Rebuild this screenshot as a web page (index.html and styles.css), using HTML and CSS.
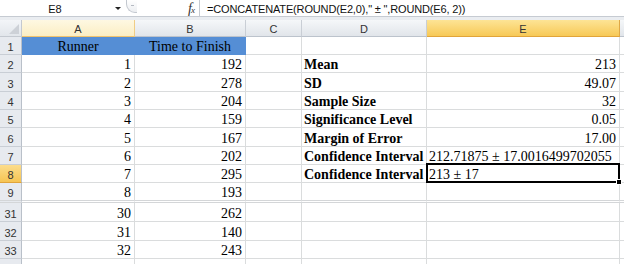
FILE: index.html
```html
<!DOCTYPE html>
<html>
<head>
<title>Confidence Interval</title>
<meta charset="utf-8">
<link rel="stylesheet" href="styles.css">
</head>
<body>

<!-- barra de fórmulas -->
<div class="formula-bar">
	<div class="name-box">E8</div>
	<div class="name-drop"><span class="arrow"></span></div>
	<div class="fx-area">
		<span class="grip"><span class="dash"></span></span>
		<span class="fx"><i>f</i><i class="x">x</i></span>
	</div>
	<div class="formula">=CONCATENATE(ROUND(E2,0)," ± ",ROUND(E6, 2))</div>
</div>
<div class="band"></div>

<!-- hoja -->
<div class="sheet">
	<div class="corner"><span class="tri"></span></div>
	<div class="hd hot">A</div>
	<div class="hd">B</div>
	<div class="hd">C</div>
	<div class="hd">D</div>
	<div class="hd sel">E</div>
	<div class="hd"></div>

	<div class="rh">1</div>
	<div class="c blue mid">Runner</div>
	<div class="c blue mid">Time to Finish</div>
	<div class="c"></div><div class="c"></div><div class="c"></div><div class="c"></div>

	<div class="rh">2</div>
	<div class="c num">1</div><div class="c num">192</div><div class="c"></div>
	<div class="c lbl">Mean</div><div class="c num">213</div><div class="c"></div>

	<div class="rh">3</div>
	<div class="c num">2</div><div class="c num">278</div><div class="c"></div>
	<div class="c lbl">SD</div><div class="c num">49.07</div><div class="c"></div>

	<div class="rh">4</div>
	<div class="c num">3</div><div class="c num">204</div><div class="c"></div>
	<div class="c lbl">Sample Size</div><div class="c num">32</div><div class="c"></div>

	<div class="rh">5</div>
	<div class="c num">4</div><div class="c num">159</div><div class="c"></div>
	<div class="c lbl">Significance Level</div><div class="c num">0.05</div><div class="c"></div>

	<div class="rh">6</div>
	<div class="c num">5</div><div class="c num">167</div><div class="c"></div>
	<div class="c lbl">Margin of Error</div><div class="c num">17.00</div><div class="c"></div>

	<div class="rh">7</div>
	<div class="c num">6</div><div class="c num">202</div><div class="c"></div>
	<div class="c lbl">Confidence Interval</div><div class="c txt">212.71875 ± 17.0016499702055</div><div class="c"></div>

	<div class="rh sel">8</div>
	<div class="c num">7</div><div class="c num">295</div><div class="c"></div>
	<div class="c lbl">Confidence Interval</div><div class="c txt active">213 ± 17</div><div class="c"></div>

	<div class="rh brk">9</div>
	<div class="c num brk">8</div><div class="c num brk">193</div><div class="c brk"></div>
	<div class="c brk"></div><div class="c brk"></div><div class="c brk"></div>

	<div class="rh">31</div>
	<div class="c num">30</div><div class="c num">262</div><div class="c"></div>
	<div class="c"></div><div class="c"></div><div class="c"></div>

	<div class="rh">32</div>
	<div class="c num">31</div><div class="c num">140</div><div class="c"></div>
	<div class="c"></div><div class="c"></div><div class="c"></div>

	<div class="rh">33</div>
	<div class="c num">32</div><div class="c num">243</div><div class="c"></div>
	<div class="c"></div><div class="c"></div><div class="c"></div>

	<div class="rh"></div>
	<div class="c"></div><div class="c"></div><div class="c"></div>
	<div class="c"></div><div class="c"></div><div class="c"></div>
</div>

</body>
</html>
```

FILE: styles.css
```css
body{
	margin: 0;
	background: #fff;
	font-family: "Liberation Sans", Arial, sans-serif;
	overflow: hidden;
}

/* barra de fórmulas */
.formula-bar{
	display: flex;
	height: 16px;
	border-bottom: 1px solid #c6cbd2;
	background: #fff;
	font-size: 11px;
	color: #111;
}

.name-box{
	width: 110px;
	text-align: center;
	padding-top: 2px;
	line-height: 15px;
}

.name-drop{
	width: 16px;
	display: flex;
	align-items: center;
	justify-content: center;
}

.arrow{
	width: 0;
	height: 0;
	border-left: 3px solid transparent;
	border-right: 3px solid transparent;
	border-top: 3px solid #222;
	margin-top: 1px;
}

.fx-area{
	width: 69px;
	display: flex;
	justify-content: space-between;
	align-items: flex-start;
	border-right: 1px solid #c6cbd2;
	padding-right: 4px;
}

.grip{
	width: 11px;
	height: 13px;
	border-left: 1px solid #c3c8cf;
	border-bottom: 1px solid #c3c8cf;
	border-radius: 0 0 0 9px;
	background: linear-gradient(#ffffff, #eceef1);
	display: flex;
	justify-content: center;
	padding-top: 5px;
	box-sizing: border-box;
}

.dash{
	width: 3px;
	height: 1px;
	background: #b5bac2;
}

.fx{
	font-family: "Liberation Serif", "Times New Roman", serif;
	font-size: 14px;
	line-height: 15px;
	color: #333;
	padding-top: 1px;
}

.fx .x{
	font-size: 9px;
	margin-left: -1px;
}

.formula{
	padding-left: 7px;
	padding-top: 2px;
	line-height: 15px;
	letter-spacing: -0.15px;
	white-space: nowrap;
}

.band{
	height: 3px;
	background: #eaedf1;
}

/* hoja */
.sheet{
	display: grid;
	grid-template-columns: 22px 113px 111px 56px 125px 193px 1fr;
	grid-template-rows: 17px 18px 18px 19px 18px 18px 19px 18px 18px 20px 19px 19px 18px 18px;
}

.sheet > div{
	box-sizing: border-box;
	border-right: 1px solid #dadcdd;
	border-bottom: 1px solid #dadcdd;
	min-width: 0;
	white-space: nowrap;
}

.corner{
	background: linear-gradient(#f3f5f8, #e2e6eb);
	border-color: #c4c9d0 !important;
	position: relative;
}

.tri{
	position: absolute;
	right: 2px;
	bottom: 2px;
	width: 0;
	height: 0;
	border-left: 10px solid transparent;
	border-bottom: 10px solid #cdd1d7;
}

.hd{
	display: flex;
	align-items: center;
	justify-content: center;
	padding-top: 1px;
	font-size: 11px;
	color: #333;
	background: linear-gradient(#f5f7f9, #e1e5ea);
	border-right-color: #c9ced5 !important;
	border-bottom-color: #bcc3cc !important;
}

.hd.hot{
	background: linear-gradient(#fef8e2, #fbeec4);
	border-right-color: #f0cd85 !important;
	border-bottom-color: #f0c36d !important;
}

.hd.sel{
	background: linear-gradient(#fde495, #f7c957);
	border-right-color: #dfa845 !important;
	border-bottom-color: #e1a43a !important;
}

.rh{
	display: flex;
	align-items: flex-end;
	justify-content: center;
	line-height: 14px;
	font-size: 11px;
	color: #333;
	background: #e7eaef;
	border-right-color: #b9c0c9 !important;
	border-bottom-color: #c9ced5 !important;
}

.rh.sel{
	background: linear-gradient(#fcdd8c, #f6c453);
	border-bottom-color: #e1a43a !important;
}

.c{
	display: flex;
	align-items: flex-end;
	font-family: "Liberation Serif", "Times New Roman", serif;
	font-size: 14px;
	line-height: 14px;
	color: #000;
	padding: 0 2px;
	background: #fff;
}

.num{
	justify-content: flex-end;
	padding-right: 3px;
}

.mid{
	justify-content: center;
}

.lbl{
	font-weight: bold;
}

.txt{
	padding-left: 2px;
}

.blue{
	background: #558ed5;
	border-color: #558ed5 !important;
}

.brk{
	border-bottom: 3px double #d4d6d8 !important;
}

.active{
	position: relative;
}

.active::after{
	content: '';
	position: absolute;
	left: -1px;
	top: -2px;
	right: -1px;
	bottom: -1px;
	border: 2px solid #000;
}

.active::before{
	content: '';
	position: absolute;
	right: -3px;
	bottom: -3px;
	width: 4px;
	height: 4px;
	background: #000;
	border: 1px solid #fff;
	z-index: 1;
}
```
